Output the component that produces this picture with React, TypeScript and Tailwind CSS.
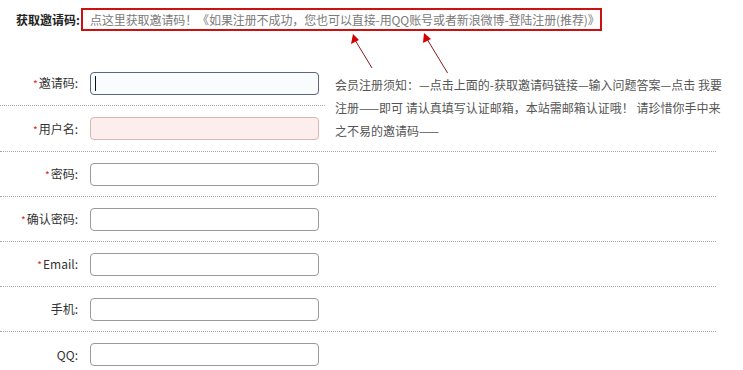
const font = { fontFamily: '"Noto Sans CJK SC", "Noto Sans", sans-serif' };

type Field = { label: string; required?: boolean; state?: "focus" | "error" };

const lower: Field[] = [
  { label: "密码", required: true },
  { label: "确认密码", required: true },
  { label: "Email", required: true },
  { label: "手机" },
  { label: "QQ" },
];

function Label({ label, required }: Field) {
  return (
    <label className="w-[80px] shrink-0 pr-[2px] text-right text-[12px] text-[#333]">
      {required && <span className="mr-[1px] text-[10px] text-[#d22]">*</span>}
      {label}:
    </label>
  );
}

function Input({ state }: { state?: Field["state"] }) {
  if (state === "focus")
    return (
      <div className="ml-[10px] flex h-[23px] w-[229px] items-center rounded-[4px] border border-[#56687a] bg-[#f9fcfd] pl-[4px]">
        <span className="h-[15px] w-px bg-[#111]" />
      </div>
    );
  if (state === "error")
    return <div className="ml-[10px] h-[23px] w-[229px] rounded-[4px] border border-[#dcb4b4] bg-[#fdeeee]" />;
  return <div className="ml-[10px] h-[23px] w-[229px] rounded-[4px] border border-[#9a9a9a] bg-white" />;
}

function Row({ f, border = true }: { f: Field; border?: boolean }) {
  return (
    <div className={`flex h-[45px] items-center ${border ? "border-b border-dotted border-[#a8a8a8]" : ""}`}>
      <Label {...f} />
      <Input state={f.state} />
    </div>
  );
}

function Arrows() {
  return (
    <svg className="pointer-events-none absolute left-0 top-0" width="743" height="120">
      <line x1="372" y1="68" x2="355" y2="40" stroke="#8b1a1a" strokeWidth="1" />
      <polygon points="353,34 351,44 359,40" fill="#d40000" />
      <line x1="450" y1="77" x2="427" y2="39" stroke="#8b1a1a" strokeWidth="1" />
      <polygon points="424,33 423,43 431,39" fill="#d40000" />
    </svg>
  );
}

export default function App() {
  return (
    <div className="relative h-[370px] w-[743px] overflow-hidden bg-white" style={font}>
      {/* header link */}
      <div className="flex items-center pl-[16px] pt-[8px]">
        <span className="w-[64px] text-[12px] font-bold text-[#222]">获取邀请码:</span>
        <a className="ml-[1px] flex h-[23px] items-center border-2 border-[#cc1111] pl-[7px] pr-0 text-[12px] tracking-[-0.1px] text-[#7a7a7a]">
          点这里获取邀请码！《如果注册不成功，您也可以直接-用QQ账号或者新浪微博-登陆注册(推荐)》
        </a>
      </div>

      <div className="mt-[30px] w-[716px]">
        {/* first block: two rows + notice */}
        <div className="flex border-b border-dotted border-[#a8a8a8]">
          <div className="w-[325px] shrink-0">
            <Row f={{ label: "邀请码", required: true, state: "focus" }} />
            <Row f={{ label: "用户名", required: true, state: "error" }} border={false} />
          </div>
          <p className="relative z-10 ml-[10px] mt-[12px] w-[392px] shrink-0 self-start bg-white text-[12px] leading-[23px] text-[#555]">
            会员注册须知：—点击上面的-获取邀请码链接—输入问题答案—点击 我要注册——即可 请认真填写认证邮箱，本站需邮箱认证哦！ 请珍惜你手中来之不易的邀请码——
          </p>
        </div>
        {lower.map((f, i) => (
          <Row key={f.label} f={f} border={i < lower.length - 1} />
        ))}
      </div>

      <Arrows />
    </div>
  );
}
